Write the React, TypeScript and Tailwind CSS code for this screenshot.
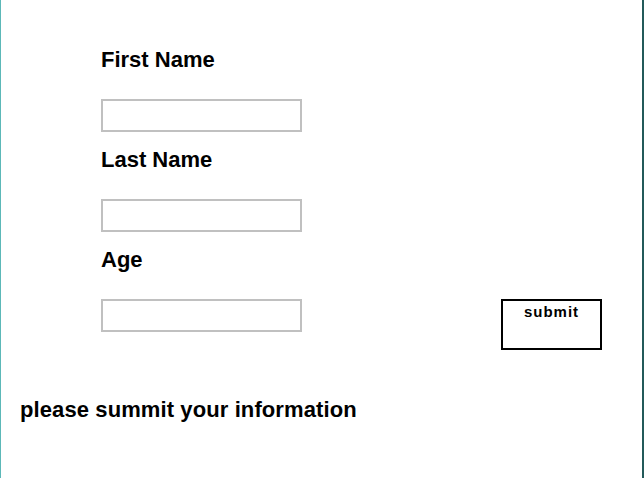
import React from 'react';

const fields = ['First Name', 'Last Name', 'Age'];

const App = () => {
  return (
    <div
      className="h-[478px] w-[644px] overflow-hidden border-l border-r-2 border-l-[#5cb8b8] border-r-[#235a5a] bg-white text-black"
      style={{ fontFamily: '"Liberation Sans", Arial, sans-serif' }}
    >
      <div className="flex pl-[100px] pt-[47px]">
        <div className="flex w-[400px] flex-col gap-[15px]">
          {fields.map((label) => (
            <div key={label} className="flex flex-col">
              <label className="text-[22px] font-bold leading-[25px]">{label}</label>
              <input
                type="text"
                className="mt-[27px] h-[33px] w-[201px] border-2 border-[#c0c0c0] bg-white outline-none"
              />
            </div>
          ))}
        </div>
        <button className="mt-[252px] flex h-[51px] w-[101px] items-start justify-center border-2 border-black bg-white pt-[2px] text-[15px] font-bold leading-[17px] tracking-[1px]">
          submit
        </button>
      </div>
      <p className="mt-[47px] pl-[19px] text-[22px] font-bold leading-[25px] tracking-[0.1px]">
        please summit your information
      </p>
    </div>
  );
};

export default App;
